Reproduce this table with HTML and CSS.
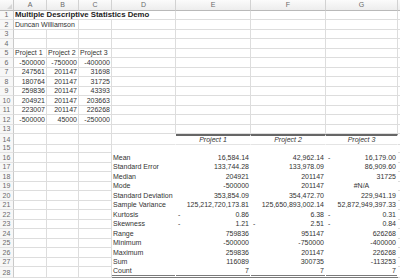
FILE: index.html
```html
<!DOCTYPE html>
<html>
<head>
<meta charset="utf-8">
<link rel="stylesheet" href="styles.css">
</head>
<body>
<div class="sheet">
  <div class="row hd"><span class="corner"></span><span>A</span><span>B</span><span>C</span><span>D</span><span>E</span><span>F</span><span>G</span><span></span></div>
  <div class="row"><span class="rh">1</span><span class="title">Multiple Descriptive Statistics Demo</span><span></span><span></span><span></span><span></span></div>
  <div class="row t"><span class="rh">2</span><span class="span2">Duncan Williamson</span><span></span><span></span><span></span><span></span><span></span><span></span></div>
  <div class="row"><span class="rh">3</span><span></span><span></span><span></span><span></span><span></span><span></span><span></span><span></span></div>
  <div class="row t"><span class="rh">4</span><span></span><span></span><span></span><span></span><span></span><span></span><span></span><span></span></div>
  <div class="row"><span class="rh">5</span><span>Project 1</span><span>Project 2</span><span>Project 3</span><span></span><span></span><span></span><span></span><span></span></div>
  <div class="row t"><span class="rh">6</span><span class="n">-500000</span><span class="n">-750000</span><span class="n">-400000</span><span></span><span></span><span></span><span></span><span></span></div>
  <div class="row"><span class="rh">7</span><span class="n">247561</span><span class="n">201147</span><span class="n">31698</span><span></span><span></span><span></span><span></span><span></span></div>
  <div class="row t"><span class="rh">8</span><span class="n">180764</span><span class="n">201147</span><span class="n">31725</span><span></span><span></span><span></span><span></span><span></span></div>
  <div class="row"><span class="rh">9</span><span class="n">259836</span><span class="n">201147</span><span class="n">43393</span><span></span><span></span><span></span><span></span><span></span></div>
  <div class="row t"><span class="rh">10</span><span class="n">204921</span><span class="n">201147</span><span class="n">203663</span><span></span><span></span><span></span><span></span><span></span></div>
  <div class="row"><span class="rh">11</span><span class="n">223007</span><span class="n">201147</span><span class="n">226268</span><span></span><span></span><span></span><span></span><span></span></div>
  <div class="row t"><span class="rh">12</span><span class="n">-500000</span><span class="n">45000</span><span class="n">-250000</span><span></span><span></span><span></span><span></span><span></span></div>
  <div class="row"><span class="rh">13</span><span></span><span></span><span></span><span></span><span></span><span></span><span></span><span></span></div>
  <div class="row t"><span class="rh">14</span><span></span><span></span><span></span><span class="tb hrow"></span><span class="tb hrow top ph">Project 1</span><span class="tb hrow top ph">Project 2</span><span class="tb hrow top ph">Project 3</span><span class="tbh"></span></div>
  <div class="row"><span class="rh">15</span><span></span><span></span><span></span><span class="tb"></span><span class="tb"></span><span class="tb"></span><span class="tb"></span><span class="tbh"></span></div>
  <div class="row t"><span class="rh">16</span><span></span><span></span><span></span><span class="tb">Mean</span><span class="tb n acc">16,584.14</span><span class="tb n acc">42,962.14</span><span class="tb n acc"><em>-</em>16,179.00</span><span class="tbh"></span></div>
  <div class="row"><span class="rh">17</span><span></span><span></span><span></span><span class="tb">Standard Error</span><span class="tb n acc">133,744.28</span><span class="tb n acc">133,978.09</span><span class="tb n acc">86,909.60</span><span class="tbh"></span></div>
  <div class="row t"><span class="rh">18</span><span></span><span></span><span></span><span class="tb">Median</span><span class="tb n">204921</span><span class="tb n">201147</span><span class="tb n">31725</span><span class="tbh"></span></div>
  <div class="row"><span class="rh">19</span><span></span><span></span><span></span><span class="tb">Mode</span><span class="tb n">-500000</span><span class="tb n">201147</span><span class="tb ctr">#N/A</span><span class="tbh"></span></div>
  <div class="row t"><span class="rh">20</span><span></span><span></span><span></span><span class="tb">Standard Deviation</span><span class="tb n acc">353,854.09</span><span class="tb n acc">354,472.70</span><span class="tb n acc">229,941.19</span><span class="tbh"></span></div>
  <div class="row"><span class="rh">21</span><span></span><span></span><span></span><span class="tb">Sample Variance</span><span class="tb n acc">125,212,720,173.81</span><span class="tb n acc">125,650,893,002.14</span><span class="tb n acc">52,872,949,397.33</span><span class="tbh"></span></div>
  <div class="row t"><span class="rh">22</span><span></span><span></span><span></span><span class="tb">Kurtosis</span><span class="tb n acc"><em>-</em>0.86</span><span class="tb n acc">6.38</span><span class="tb n acc"><em>-</em>0.31</span><span class="tbh"></span></div>
  <div class="row"><span class="rh">23</span><span></span><span></span><span></span><span class="tb">Skewness</span><span class="tb n acc"><em>-</em>1.21</span><span class="tb n acc"><em>-</em>2.51</span><span class="tb n acc"><em>-</em>0.84</span><span class="tbh"></span></div>
  <div class="row t"><span class="rh">24</span><span></span><span></span><span></span><span class="tb">Range</span><span class="tb n">759836</span><span class="tb n">951147</span><span class="tb n">626268</span><span class="tbh"></span></div>
  <div class="row"><span class="rh">25</span><span></span><span></span><span></span><span class="tb">Minimum</span><span class="tb n">-500000</span><span class="tb n">-750000</span><span class="tb n">-400000</span><span class="tbh"></span></div>
  <div class="row t"><span class="rh">26</span><span></span><span></span><span></span><span class="tb">Maximum</span><span class="tb n">259836</span><span class="tb n">201147</span><span class="tb n">226268</span><span class="tbh"></span></div>
  <div class="row"><span class="rh">27</span><span></span><span></span><span></span><span class="tb">Sum</span><span class="tb n">116089</span><span class="tb n">300735</span><span class="tb n">-113253</span><span class="tbh"></span></div>
  <div class="row t"><span class="rh">28</span><span></span><span></span><span></span><span class="tb last">Count</span><span class="tb n last">7</span><span class="tb n last">7</span><span class="tb n last">7</span><span class="tbh"></span></div>
</div>
</body>
</html>
```
FILE: styles.css
```css
* { box-sizing: border-box; margin: 0; padding: 0; }

body {
  margin: 0;
  width: 400px;
  height: 278px;
  overflow: hidden;
  background: #ffffff;
  font-family: "Liberation Sans", Arial, sans-serif;
  font-size: 7px;
  color: #333333;
}

.sheet {
  display: flex;
  flex-direction: column;
}

.row {
  display: grid;
  grid-template-columns: 14px 33px 32px 33px 64px 75px 75px 72px 2px;
  height: 9px;
}

.row.t { height: 10px; }
.row.hd { height: 11px; }

.row > span {
  display: flex;
  align-items: flex-end;
  white-space: nowrap;
  line-height: 8px;
  padding: 0 1px;
  border-right: 1px solid #dddddd;
  border-bottom: 1px solid #dddddd;
}

.row > span:last-child { border-right: none; }

.row > .rh {
  justify-content: center;
  background: #f7f7f7;
  color: #6a6a6a;
  border-right-color: #c9c9c9;
  border-bottom-color: #e2e2e2;
}

.row.hd > span {
  justify-content: center;
  align-items: center;
  background: linear-gradient(#fbfbfb, #ededed);
  color: #6a6a6a;
  border-right-color: #d2d2d2;
  border-bottom-color: #b9b9b9;
  line-height: 10px;
}

.row.hd > .corner {
  position: relative;
  border-right-color: #c9c9c9;
}

.corner::after {
  content: "";
  position: absolute;
  right: 1px;
  bottom: 1px;
  border-left: 5px solid transparent;
  border-bottom: 5px solid #d6d6d6;
}

.title {
  grid-column: span 4;
  font-weight: bold;
  font-size: 7.8px;
  color: #222222;
}

.span2 { grid-column: span 2; }

.n { justify-content: flex-end; }

.row > .tb {
  border-right-color: transparent;
  border-bottom-color: transparent;
}

.row > .tbh { border-bottom: 1px solid #dddddd; }

.row > .hrow { border-bottom-color: #e4e4e4; }

.row > .top { border-top: 2px solid #666666; }

.ph {
  justify-content: center;
  font-style: italic;
}

.acc { padding-right: 4px; }

.acc em {
  font-style: normal;
  margin-right: auto;
  padding-left: 1px;
}

.ctr { justify-content: center; }

.row > .last { border-bottom: 3px double #7a7a7a; }
```
